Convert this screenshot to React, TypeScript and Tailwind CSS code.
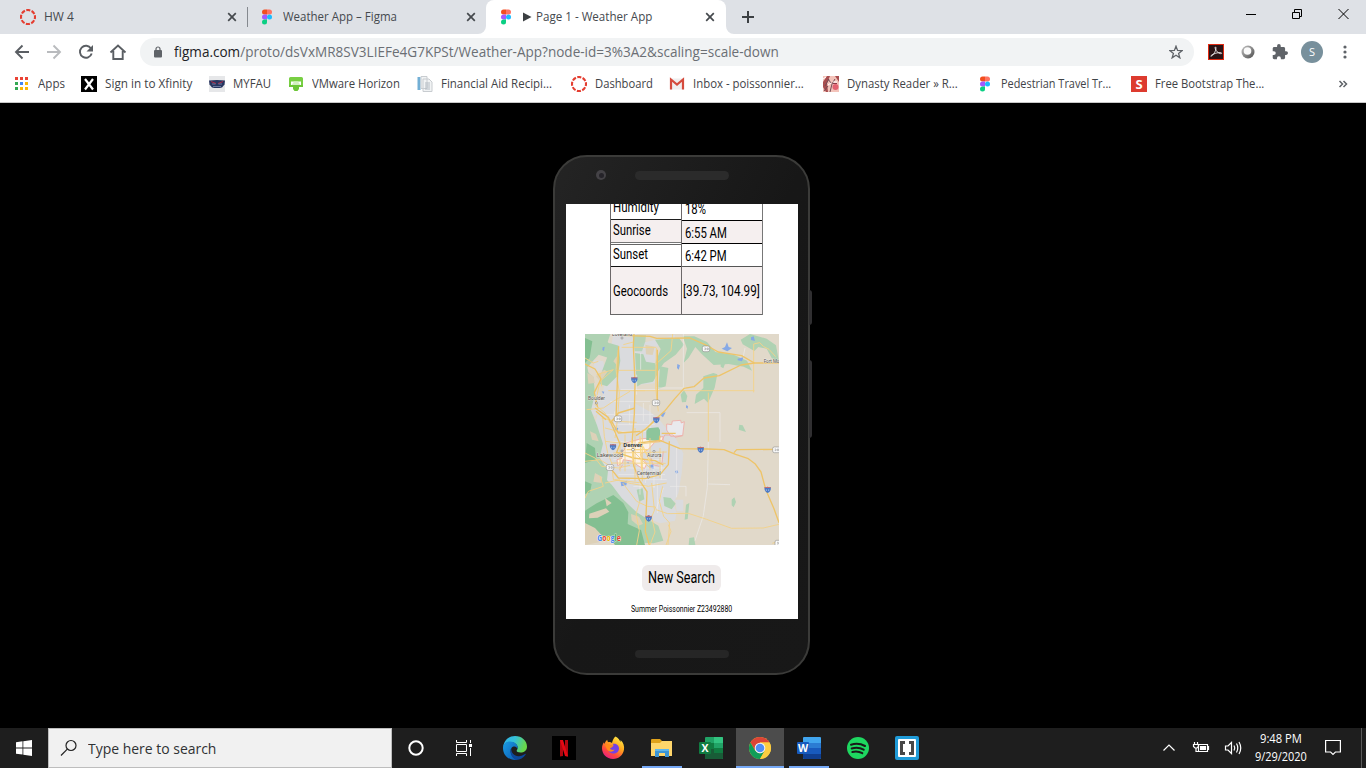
import { useLayoutEffect, useRef, useState } from "react";
import type { ReactNode } from "react";

/* A single line of text squeezed to an exact advance width. */
function Fit({ w, className = "", children }: { w: number; className?: string; children: ReactNode }) {
  const ref = useRef<HTMLSpanElement>(null);
  const [k, setK] = useState(1);
  useLayoutEffect(() => {
    if (ref.current && ref.current.offsetWidth > 0) setK(w / ref.current.offsetWidth);
  }, [w]);
  return (
    <span className="block shrink-0 whitespace-nowrap" style={{ width: w }}>
      <span ref={ref} className={`inline-block origin-left whitespace-nowrap align-top ${className}`} style={{ transform: `scaleX(${k})` }}>
        {children}
      </span>
    </span>
  );
}

const FigmaIcon = () => (
  <svg width="16" height="16" viewBox="0 0 16 16" className="shrink-0">
    <path d="M8 .5H5.5a2.5 2.5 0 0 0 0 5H8z" fill="#f24e1e" />
    <path d="M8 .5h2.5a2.5 2.5 0 0 1 0 5H8z" fill="#ff7262" />
    <path d="M8 5.5H5.5a2.5 2.5 0 0 0 0 5H8z" fill="#a259ff" />
    <circle cx="10.5" cy="8" r="2.5" fill="#1abcfe" />
    <path d="M8 10.5H5.5A2.5 2.5 0 1 0 8 13z" fill="#0acf83" />
  </svg>
);

const CanvasIcon = () => (
  <svg width="16" height="16" viewBox="0 0 16 16" className="shrink-0">
    <circle cx="8" cy="8" r="7" fill="none" stroke="#e43d30" strokeWidth="2.1" strokeDasharray="4.1 1.4" strokeDashoffset="2" />
  </svg>
);

const CloseIcon = () => (
  <svg width="10" height="10" viewBox="0 0 10 10" className="shrink-0">
    <path d="M1.2 1.2l7.6 7.6M8.8 1.2L1.2 8.8" stroke="#45494d" strokeWidth="1.7" />
  </svg>
);

function TabStrip() {
  return (
    <div className="flex h-[34px] bg-[#dee1e6] text-[12px] leading-4 text-[#45494e]">
      <div className="flex w-[248px] items-center pl-5">
        <CanvasIcon />
        <div className="w-2 shrink-0" />
        <Fit w={30}>HW 4</Fit>
        <div className="grow" />
        <CloseIcon />
        <div className="h-5 w-[11px] shrink-0 border-r border-[#85898f]" />
      </div>
      <div className="flex w-[238px] items-center pl-[11px]">
        <FigmaIcon />
        <div className="w-2 shrink-0" />
        <Fit w={114}>Weather App – Figma</Fit>
        <div className="grow" />
        <CloseIcon />
        <div className="w-[10px] shrink-0" />
      </div>
      <div className="relative flex w-[240px] items-center rounded-t-lg bg-white pl-3">
        <svg className="absolute bottom-0 -left-2" width="8" height="8">
          <path d="M8 0v8H0a8 8 0 0 0 8-8z" fill="#fff" />
        </svg>
        <svg className="absolute -right-2 bottom-0" width="8" height="8">
          <path d="M0 0v8h8a8 8 0 0 1-8-8z" fill="#fff" />
        </svg>
        <FigmaIcon />
        <div className="w-[9px] shrink-0" />
        <svg width="9" height="10" viewBox="0 0 9 10" className="shrink-0">
          <path d="M0 .5l8.5 4.5L0 9.500z" fill="#3c4043" />
        </svg>
        <div className="w-1 shrink-0" />
        <Fit w={116}>Page 1 - Weather App</Fit>
        <div className="grow" />
        <CloseIcon />
        <div className="w-[11px] shrink-0" />
      </div>
      <svg className="mt-[11px] ml-4" width="12" height="12" viewBox="0 0 12 12">
        <path d="M6 0v12M0 6h12" stroke="#3c4043" strokeWidth="2" />
      </svg>
      <div className="grow" />
      <svg className="mt-2" width="120" height="14" viewBox="0 0 120 14" fill="none" stroke="#000">
        <path d="M0 6.500h10M46.500 4.500h7v6h-7zM48.500 4.500v-3h7v7h-2M92.500 1l10 10M102.500 1l-10 10" />
      </svg>
    </div>
  );
}

function Toolbar() {
  return (
    <div className="flex h-9 items-center bg-white">
      <svg width="140" height="36" viewBox="0 34 140 36" fill="none" stroke="#5a5e63" strokeWidth="1.900" className="shrink-0">
        <path d="M29 52H17M22.500 45.500L16 52l6.500 6.500" />
        <path d="M47 52h12M53.500 45.500L60 52l-6.500 6.500" stroke="#b9bbbe" />
        <path d="M91 48.500a6 6 0 1 0 .7 5" />
        <path d="M93 45v6.500h-6.500z" fill="#5a5e63" stroke="none" />
        <path d="M110.500 52.500l7.500-7 7.500 7M113.300 51v8h9.400v-8" />
      </svg>
      <div className="flex h-7 w-[1054px] shrink-0 items-center rounded-full bg-[#f1f3f4] pl-[14px] text-[14px] leading-5 text-[#6b6f74]">
        <svg width="8" height="12" viewBox="0 0 8 12">
          <path d="M2 5V3a2 2 0 0 1 4 0v2" fill="none" stroke="#5f6368" strokeWidth="1.200" />
          <rect y="4" width="8" height="7.500" rx="1" fill="#5f6368" />
        </svg>
        <div className="w-3 shrink-0" />
        <Fit w={605}>
          <span className="text-[#202124]">figma.com</span>/proto/dsVxMR8SV3LIEFe4G7KPSt/Weather-App?node-id=3%3A2&amp;scaling=scale-down
        </Fit>
        <div className="grow" />
        <svg width="14" height="14" viewBox="0 0 24 24" fill="none" stroke="#5f6368" strokeWidth="2.200" className="mr-[11px]">
          <path d="M12 2l2.700 7.200 8 .3-6.300 4.900 2.200 7.600L12 17.600 5.400 22l2.200-7.600L1.300 9.500l8-.3z" />
        </svg>
      </div>
      <svg width="16" height="16" viewBox="0 0 16 16" className="ml-[14px] shrink-0">
        <rect x=".5" y=".5" width="15" height="15" fill="#2b1416" stroke="#e22a12" />
        <path d="M3 12.300c2.500-1 5.200-5.500 5-8.500-.1-1.300-1.200-1-.8.500.7 2.700 3 5 5.500 5.400 1.300.1 1.200-1 0-1.100-3.200-.2-6.600.9-9 2.500-.8.600-1.200 1.200-.7 1.200z" fill="none" stroke="#fff" strokeWidth=".8" />
      </svg>
      <svg width="16" height="16" viewBox="0 0 16 16" className="ml-4 shrink-0">
        <defs>
          <linearGradient id="ring" x1="0" y1="0" x2="1" y2="1">
            <stop offset="0" stopColor="#c4c4c4" />
            <stop offset="1" stopColor="#4d4d4d" />
          </linearGradient>
        </defs>
        <circle cx="8" cy="8" r="6.500" fill="url(#ring)" />
        <circle cx="7.500" cy="7" r="3.800" fill="#fafafa" />
      </svg>
      <svg width="16" height="16" viewBox="1 1 22 22" className="ml-4 shrink-0">
        <path fill="#5f6368" d="M20.500 11H19V7c0-1.100-.9-2-2-2h-4V3.500a2.500 2.500 0 0 0-5 0V5H4c-1.100 0-2 .9-2 2v3.800h1.500a2.700 2.700 0 0 1 0 5.400H2V20c0 1.100.9 2 2 2h3.800v-1.500a2.700 2.700 0 0 1 5.400 0V22H17c1.100 0 2-.9 2-2v-4h1.500a2.500 2.500 0 0 0 0-5z" />
      </svg>
      <div className="ml-[13px] flex size-[22px] shrink-0 items-center justify-center rounded-full bg-[#78909c] text-[11px] text-white">S</div>
      <svg width="4" height="14" viewBox="0 0 4 14" fill="#5f6368" className="ml-5 shrink-0">
        <circle cx="2" cy="2" r="1.600" />
        <circle cx="2" cy="7" r="1.600" />
        <circle cx="2" cy="12" r="1.600" />
      </svg>
    </div>
  );
}

const AppsIcon = () => (
  <svg width="16" height="16" viewBox="0 0 16 16" className="shrink-0">
    <path d="M1 1h3v3H1zM6 1h3v3H6zM11 1h3v3h-3z" fill="#ea4335" />
    <path d="M1 6h3v3H1zM1 11h3v3H1z" fill="#34a853" />
    <path d="M6 6h3v3H6z" fill="#4285f4" />
    <path d="M11 6h3v3h-3zM6 11h3v3H6zM11 11h3v3h-3z" fill="#fbb605" />
  </svg>
);
const XfinityIcon = () => (
  <svg width="16" height="16" viewBox="0 0 16 16" className="shrink-0">
    <rect width="16" height="16" />
    <path d="M4 3l8 10.500M12 3L4 13.500" stroke="#fff" strokeWidth="2.200" />
  </svg>
);
const OwlIcon = () => (
  <svg width="16" height="16" viewBox="0 0 16 16" className="shrink-0">
    <rect width="16" height="16" fill="#e6e7e9" />
    <path d="M0 4.500c5-.8 11-.8 16 0l-.5 4-2.500 3c-3 .8-7 .8-10 0l-2.500-3z" fill="#27355f" />
    <path d="M2 5.500l5 2M14 5.500L9 7.500" stroke="#b02a46" />
    <path d="M3 8h3.500M9.500 8H13M4 10.500h8" stroke="#7d8bb0" strokeWidth=".8" />
  </svg>
);
const VMIcon = () => (
  <svg width="16" height="16" viewBox="0 0 16 16" className="shrink-0">
    <path d="M2.500 1h11A1.500 1.500 0 0 1 15 2.500V10h-2V5.500H3V10H1V2.500A1.500 1.500 0 0 1 2.500 1z" fill="#78cf43" />
    <path d="M6 5.500h4l3 4.500H3z" fill="#d3efc2" />
    <path d="M1 9h14v2H1zM5 11h6v2L9.500 15h-3L5 13z" fill="#6cc638" />
  </svg>
);
const DocIcon = () => (
  <svg width="16" height="16" viewBox="0 0 16 16" className="shrink-0">
    <path d="M.5 1h3v13h-3z" fill="#72afd5" />
    <path d="M4 .5h6v12H4zM6 3h6l3 3v9.500H6z" fill="#f1f3f4" stroke="#c8ccd0" />
    <path d="M8 7h5M8 9h5M8 11h5M8 13h5" stroke="#b2bac2" />
  </svg>
);
const GmailIcon = () => (
  <svg width="16" height="16" viewBox="0 0 16 16" className="shrink-0">
    <rect x="1" y="2.500" width="14" height="11" fill="#f0eeee" />
    <path d="M2 13.500v-10l6 5 6-5v10" fill="none" stroke="#d54b3d" strokeWidth="2.200" />
  </svg>
);
const DynastyIcon = () => (
  <svg width="16" height="16" viewBox="0 0 16 16" className="shrink-0">
    <rect width="16" height="16" fill="#f3c3ba" />
    <path d="M0 6l4-6h3L4 7l1 9H3L0 11zM12 0h4v6z" fill="#a84e50" />
    <path d="M2 10l4-7M7 16l2-8 3-5M1 15l4-5M5 3l3 4" stroke="#724b55" fill="none" />
    <circle cx="12.500" cy="11" r="3" fill="#e26170" />
    <path d="M5 9l3-2M10 6h4M0 3l3-2" stroke="#fff" />
    <path d="M10 7.500h4" stroke="#8e3a48" />
  </svg>
);
const SIcon = () => (
  <div className="flex size-4 shrink-0 items-center justify-center bg-[#dd3b2f] text-[13px] leading-none font-bold text-white">S</div>
);

function Bookmark({ cell, icon, w, label }: { cell: string; icon: ReactNode; w: number; label: string }) {
  return (
    <div className={`flex shrink-0 items-center gap-2 ${cell}`}>
      {icon}
      <Fit w={w}>{label}</Fit>
    </div>
  );
}

function Bookmarks() {
  return (
    <div className="flex h-[33px] items-center border-b border-[#c8c8c8] bg-white pb-[4px] pl-[14px] text-[12px] leading-4 text-[#3f4347]">
      <Bookmark cell="w-[67px]" icon={<AppsIcon />} w={27} label="Apps" />
      <Bookmark cell="w-[128px]" icon={<XfinityIcon />} w={87} label="Sign in to Xfinity" />
      <Bookmark cell="w-[79px]" icon={<OwlIcon />} w={38} label="MYFAU" />
      <Bookmark cell="w-[129px]" icon={<VMIcon />} w={88} label="VMware Horizon" />
      <Bookmark cell="w-[154px]" icon={<DocIcon />} w={111} label="Financial Aid Recipi..." />
      <Bookmark cell="w-[98px]" icon={<CanvasIcon />} w={58} label="Dashboard" />
      <Bookmark cell="w-[154px]" icon={<GmailIcon />} w={111} label="Inbox - poissonnier..." />
      <Bookmark cell="w-[154px]" icon={<DynastyIcon />} w={111} label="Dynasty Reader » R..." />
      <Bookmark cell="w-[154px]" icon={<FigmaIcon />} w={110} label="Pedestrian Travel Tr..." />
      <Bookmark cell="w-[207px]" icon={<SIcon />} w={109} label="Free Bootstrap The..." />
      <svg width="10" height="8" viewBox="0 0 10 8" fill="none" stroke="#5f6368" strokeWidth="1.500">
        <path d="M1.500 1l3 3-3 3M5.500 1l3 3-3 3" />
      </svg>
    </div>
  );
}

const Interstate = ({ x, y }: { x: number; y: number }) => (
  <g transform={`translate(${x} ${y})`}>
    <path d="M-9-8q4 2 9-1 5 3 9 1 3 12-9 18-12-6-9-18z" fill="#4a79c5" />
    <path d="M-9-8q4 2 9-1 5 3 9 1v3H-9z" fill="#d06b67" />
    <path d="M-4 4v-5M3-1v5" stroke="#c5d4f0" strokeWidth="2" />
  </g>
);
const Route = ({ x, y }: { x: number; y: number }) => (
  <g transform={`translate(${x} ${y})`}>
    <rect x="-11" y="-8" width="22" height="17" rx="5" fill="#fafafa" stroke="#808080" strokeWidth="1.600" />
    <path d="M-5-2h4v5h-4M3-2h4v5H3z" fill="none" stroke="#858585" strokeWidth="1.500" />
  </g>
);

function MapView() {
  return (
    <svg className="block h-[211px] w-[194px]" viewBox="15 18 582 633" preserveAspectRatio="none">
      <rect x="15" y="18" width="582" height="633" fill="#e1d9ca" />
      {/* urban */}
      <g fill="#dadbde">
        <path d="M100 18h70l5 30 110-28v14l-55 22-5 110-60 5 0 55 45 25 25 20 20 25 30 30 25 50-5 60-10 60-15 30 10 30-5 22-45 8-40-15-70-35-50-65-15-60-10-70-8-60 20-80z" />
        <path d="M20 190l40 5 10 45-25 25-22-20zM40 95l30 5 5 25-30 5z" />
        <path d="M225 505l40 5 15 15v22l-35 10-20-25zM285 515h25v35h-20z" />
      </g>
      {/* parks and valleys */}
      <g fill="#afd2b3">
        <path d="M15 18h76l-8 24 18 18-15 30-30-10-18 20-16 18 8 40-15 8z" />
        <path d="M88 45l28 8 5 45-8 45-32 32-24-8 10-40 15-40z" />
        <path d="M165 75l25 4 8 22 28 5 8 30-15 25-35 7-14 8z" />
        <path d="M158 22l40 0-2 18-10 30-22 0z" opacity=".8" />
        <path d="M225 35l72-5 15 20-25 30-35 25-20 28-5-30 15-40z" />
        <path d="M240 115l25 5-8 55-22 8z" />
        <path d="M308 25h35l38 17 25 30 55 8 40 18 15 30-25-12-45-8-45 3-35-32-20-22-20 32-15 15 10-42z" />
        <path d="M482 35l28-17 50 14 28 20 9 50-22-12-15-28-25-5-12 12-35-20z" />
        <path d="M370 145l30-10 12 4-8 40-20 45-12-12-28 16 4-28 22-20z" />
        <path d="M302 200l10-14 10 18-4 18-12 1z" />
        <path d="M422 100l8-5 5 12-5 14-8-5zM478 290l10 2 10 20-22-7zM455 515l8-7 5 14-7 16-6-6z" />
        <path d="M15 125l25 22 5 50-12 50 18 45 18 55-10 42 25 40-5 45-15 35-49 10z" />
        <path d="M15 440l45-5 35 35 30 40 45 43 65 40 15 45-30 8-205-10z" />
        <path d="M170 485l18-4 5 33-15 7zM250 507l22 3 15 17-12 17-22-10zM318 530l10-5-5 48-9 2zM328 630l14-2 4 23h-20z" />
      </g>
      <g fill="#83bf91">
        <path d="M15 30l22 10-8 50-14 15zM20 345l25 15 3 35-33 10zM15 460l20 8-5 25-15 5z" />
        <path d="M15 548l35-22 50-25 30 24 15 28-2 35 40 18 12 45H105l-20-26-70-10z" />
      </g>
      <g fill="#ddd1b8">
        <path d="M28 557l50-16 10 10-35 18-26 2zM15 585l30 15 35 38-65 13zM153 558l24 8 12 22-14 5-20-16z" />
        <path d="M22 135l18 10 5 20-20 2zM100 100l10-15 2 28zM30 310l18 8 8 22-20-5z" />
        <path d="M75 510l20 15-15 10zM45 435l22 12-3 18-24-4zM196 50l28 6-6 25-20-2zM48 145l25-20 10 6-22 30z" />
      </g>
      {/* reservoirs */}
      <g fill="#86a9e6">
        <path d="M425 62l10-5 6-14 5 14 10 3-14 10zM513 28l8-3 4 14-12-3zM473 92l17-4-4 12-13-3zM292 108l8 4-4 13-5-5zM68 58l6-2-2 13-5-3zM245 255l12-2-8 15-6-5zM318 232l6 2-1 8-5-3zM208 412l12-3 3 15-14-5zM122 462l20-4-3 14-15 3zM100 298l15 2-3 8-12-2zM65 190l8 1-3 7zM285 430l6-4 4 7-6 5zM140 405l5-4 3 6z" />
      </g>
      {/* minor roads */}
      <g fill="none" stroke="#edeceb" strokeWidth="2">
        <path d="M310 18v160M228 180h90M420 254v88M320 254h100M385 341l-3 137-12 85-25 75M290 356v152M270 475h48v30M495 60l-5 25M122 185h115M90 220h120M75 260h145M95 290h130M110 310h110M100 395h150M105 420h150M115 440h140M90 340h75M170 140v60M182 75v50M190 225v55M148 230v60M104 250v70M210 230v80M196 400v65M222 410v70M245 370v85M150 455h110M160 475h65M180 435v65M232 465v90" />
        <path d="M385 468l65 2M250 480l-20 60" />
      </g>
      {/* Denver core */}
      <path d="M138 345l22-6 20-6 20-2 12-8 15 6 22-3 0 14-24 2-20 22-24 15 5 10 14 18-6 14-14-4-25-18-25-4-3 10-14 8-2-18 15-4-5-15 12-10z" fill="#fbf2ea" stroke="#efa8a0" strokeWidth="2.500" />
      <path d="M260 288l15 2 2-11 25-2 2 8 9-4-5 42-36 2-12-19z" fill="#e9e9ed" stroke="#eeaaa5" strokeWidth="2.500" />
      <path d="M198 333l10-2 3 12 35-6 8-16h25l6 7 22-5M118 425l10-15M213 390l5 20 20 5M250 370l-4 35-16 3" fill="none" stroke="#efaaa3" strokeWidth="2.500" />
      <path d="M199 309l6-8 30-3 5 8v22l-4 12-37-4z" fill="#8dc59b" />
      {/* secondary roads */}
      <g fill="none" stroke="#f2d28a" strokeWidth="2.800" strokeLinejoin="round">
        <path d="M125 58h104M110 127h117M85 188h110M160 188h363M385 194v147M521 193V48l18-4 12 12 16 8 20 22M15 90l25 15 15-5M115 65l-7 60 10 70-5 75-8 60M229 60l-2 120 8 70M100 125l-40 35-15 70 30 25 15 30M130 50l30-8M50 140l50-15M65 175l-5-40M278 18l-5 50-45 40" />
        <path d="M20 245l50-5 30-20 50-30M65 270l45 10 60 3M75 300l60 15 50-5 40-30M68 265l5 60 10 50 12 30 5 50 85 10M15 375l30 15 20 25 50 5 35-8M15 400l45-5 40 25M75 340l90 10 85-10M100 375l160-3M95 405l162 1M165 300v160M187 305v155M135 320v110M210 330v95M240 360v90M120 340v90M60 445l10 30-45 15-10 20M75 465l45-10M105 455l50 12 50 8 55-10M160 370l50 50" />
        <path d="M128 465l42 55 32 15 25 2-12 30 10 45-15 39M180 518l-12 40 10 50-8 43M215 465l8 80M248 475l-10 45 13 45 18 20-5 66M228 545l35 12M263 557l62-1 55 18 75 27 95-1 47-11M265 590l8 20-15 41M597 640l-20 6" />
      </g>
      {/* highways */}
      <g fill="none" stroke="#eec468" strokeWidth="4" strokeLinejoin="round">
        <path d="M125 22l85 3 20 6 100-1 45 20 40 22 70 11 38 22h74" />
        <path d="M162 18l-2 35 5 110-2 95-6 75 4 80 18 45 22 33-5 120 12 40" />
        <path d="M523 105l-40 6-65 32-46 7-30 26-30 5-27 30-30 37-22 20-35 35-30 20" />
        <path d="M175 345l65-8 60 25 82 1 50 2 35 14 38 13 20 15 18 25 15 55 24 55 15 42M462 374l8-9 127-1" />
        <path d="M45 240l40 28 20 45 15 35-10 25 50 17 65 8 25 13M116 55l-8 215M232 65v165M165 240l-50 15-20 25 20 35 65-5M268 340l-3 70-25 30-45 12-80-2-20-25" />
        <path d="M15 108l30 15 18 30-20 40 10 45M48 250l30 25M240 323l-2 18M245 316h42" />
      </g>
      <path d="M165 352l25 5 22 50M140 365h65M155 337l5 70M180 325l5 100" fill="none" stroke="#fad887" strokeWidth="4" />
      <Interstate x={163} y={156} />
      <Interstate x={229} y={276} />
      <Interstate x={99} y={357} />
      <Interstate x={362} y={365} />
      <Interstate x={563} y={485} />
      <Interstate x={206} y={571} />
      <Route x={378} y={62} />
      <Route x={228} y={224} />
      <Route x={114} y={272} />
      <Route x={90} y={418} />
      <Route x={589} y={365} />
      <Route x={596} y={645} />
      <g fill="#4c4c4c" stroke="#f3efe7" strokeWidth="2" paintOrder="stroke" fontFamily="Roboto, sans-serif" fontSize="16">
        <text x="96" y="24" textLength="60" lengthAdjust="spacingAndGlyphs">Loveland</text>
        <text x="24" y="217" textLength="51" lengthAdjust="spacingAndGlyphs">Boulder</text>
        <text x="551" y="105" textLength="74" lengthAdjust="spacingAndGlyphs">Fort Morgan</text>
        <text x="130" y="357" fontWeight="700" fontSize="17" textLength="57" lengthAdjust="spacingAndGlyphs" fill="#333">Denver</text>
        <text x="50" y="388" textLength="79" lengthAdjust="spacingAndGlyphs">Lakewood</text>
        <text x="201" y="388" textLength="43" lengthAdjust="spacingAndGlyphs">Aurora</text>
        <text x="170" y="441" textLength="72" lengthAdjust="spacingAndGlyphs">Centennial</text>
      </g>
      <g fill="#fff" stroke="#555" strokeWidth="1.500">
        <circle cx="159" cy="365" r="4" />
        <circle cx="222" cy="370" r="3" />
        <circle cx="49" cy="225" r="3" />
        <circle cx="205" cy="447" r="3" />
        <circle cx="126" cy="369" r="3" />
        <circle cx="126" cy="30" r="3" />
      </g>
      <text x="52" y="640" fontFamily="Open Sans, sans-serif" fontSize="24" fontWeight="700" textLength="70" lengthAdjust="spacingAndGlyphs" stroke="#fff" strokeWidth="2" paintOrder="stroke">
        <tspan fill="#4285f4">G</tspan><tspan fill="#ea4335">o</tspan><tspan fill="#f5b400">o</tspan><tspan fill="#4285f4">g</tspan><tspan fill="#34a853">l</tspan><tspan fill="#ea4335">e</tspan>
      </text>
    </svg>
  );
}

function Phone() {
  return (
    <div className="relative h-[520px] w-[257px] rounded-[34px] border-2 border-[#3b3b39] bg-gradient-to-br from-[#242424] via-[#171717] to-[#181818] font-[Roboto,sans-serif] text-black">
      <div className="absolute top-[133px] -right-[4px] h-[35px] w-[3px] rounded-r-sm bg-[#302f31]" />
      <div className="absolute top-[203px] -right-[4px] h-[78px] w-[3px] rounded-r-sm bg-[#302f31]" />
      <div className="flex h-[47px] pt-[13px] pl-[41px]">
        <div className="flex size-[10px] items-center justify-center rounded-full bg-[#444246]">
          <div className="size-[5px] rounded-full bg-[#252329]" />
        </div>
        <div className="mt-[1px] ml-[29px] h-[9px] w-[94px] rounded-full bg-[#2b2b2b]" />
      </div>
      <div className="ml-[11px] h-[415px] w-[232px] overflow-hidden bg-white">
        <div className="ml-[44px] flex text-[14px] leading-4">
          <div className="w-[72px] border-x border-[#6c6869]">
            <div className="flex h-[16px] items-end border-b border-[#1e1e1e] pb-[4px] pl-[2px]">
              <Fit w={46}>Humidity</Fit>
            </div>
            <div className="flex h-[23px] items-center border-b border-[#777] bg-[#f5efef] pb-[2px] pl-[2px]">
              <Fit w={38}>Sunrise</Fit>
            </div>
            <div className="mt-px flex h-[23px] items-center border-t border-b border-t-[#666] border-b-[#111] pb-[3px] pl-[2px]">
              <Fit w={35}>Sunset</Fit>
            </div>
            <div className="flex h-[48px] items-center border-b border-[#666] bg-[#f5efef] pl-[2px]">
              <Fit w={55}>Geocoords</Fit>
            </div>
          </div>
          <div className="w-[81px] border-r border-[#777]">
            <div className="flex h-[17px] items-end border-b border-black pb-[3px] pl-[3px]">
              <Fit w={21}>18%</Fit>
            </div>
            <div className="flex h-[23px] items-center border-b border-black bg-[#f5efef] pt-px pl-[3px]">
              <Fit w={42}>6:55 AM</Fit>
            </div>
            <div className="flex h-[23px] items-center border-b border-[#555] pt-[2px] pl-[3px]">
              <Fit w={42}>6:42 PM</Fit>
            </div>
            <div className="flex h-[48px] items-center border-b border-[#666] bg-[#f5efef] pl-px">
              <Fit w={77}>[39.73, 104.99]</Fit>
            </div>
          </div>
        </div>
        <div className="mt-[19px] ml-[19px]">
          <MapView />
        </div>
        <div className="mt-5 ml-[76px] flex h-[26px] w-[79px] items-center justify-center rounded-[6px] bg-[#efebeb] text-[16px]">
          <Fit w={67}>New Search</Fit>
        </div>
        <div className="mt-[13px] ml-[65px] text-[8.5px] leading-[11px]">
          <Fit w={101}>Summer Poissonnier Z23492880</Fit>
        </div>
      </div>
      <div className="mt-[31px] ml-[80px] h-[8px] w-[94px] rounded-full bg-[#262626]" />
    </div>
  );
}

const EdgeIcon = () => (
  <svg width="24" height="24" viewBox="0 0 24 24">
    <defs>
      <linearGradient id="e1" x1="0" y1="0" x2="1" y2=".3">
        <stop offset="0" stopColor="#2fb1ea" />
        <stop offset=".5" stopColor="#35c1d8" />
        <stop offset="1" stopColor="#68d84b" />
      </linearGradient>
      <linearGradient id="e2" x1="0" y1="0" x2="1" y2="1">
        <stop offset="0" stopColor="#1b9de2" />
        <stop offset="1" stopColor="#0a5ab5" />
      </linearGradient>
    </defs>
    <path d="M.3 10.500C1 4.500 6 0 12 0c7 0 12 5 12 10.500 0 4-3 6-6.500 6-2.700 0-4.200-1-3.800-2 .5-1 1-1.500 1-2.800C14.700 8 10.500 6 7 6 3.500 6 1.300 8 .3 10.500z" fill="url(#e1)" />
    <path d="M0 12c0-4 3-6.500 7-6.500 4.500 0 7.700 3 7.700 6 0 .6-.1 1.100-.4 1.600-.2-2-1.800-3.100-3.800-2.600-2 .6-3.500 3-2.600 6.500 1 4 4.500 6.500 6.500 6.700C6 25 0 19.500 0 12z" fill="url(#e2)" />
    <path d="M8.500 11.500c-1.200 6 4 9.500 8.500 8.500 2-.4 3.600-1.300 5.200-2.100.5-.2.800.1.500.6C20.500 22 17 23.900 13.500 23.900 8.500 22.500 6 16 8.500 11.500z" fill="#0d489b" />
  </svg>
);

const FirefoxIcon = () => (
  <svg width="24" height="24" viewBox="0 0 24 24">
    <defs>
      <linearGradient id="ff" x1=".8" y1="0" x2=".2" y2="1">
        <stop offset="0" stopColor="#fff04a" />
        <stop offset=".4" stopColor="#ffa51d" />
        <stop offset=".7" stopColor="#ff4a3c" />
        <stop offset="1" stopColor="#e3178d" />
      </linearGradient>
    </defs>
    <path d="M14.500.5c3 1.500 4.500 4 4.800 5.500.4-.6.400-1.400.2-2 3 2.500 4 6 3.500 9.500C22.200 19 17.800 23 12 23 5.500 23 1 18 1 12.300c0-2.500.8-4.500 2-6L3.300 8c.7-1.500 1.500-3 2.800-4.300L7 6.300c1.800-.5 3 0 4 .8C11.500 4.500 12.500 2 14.500.5z" fill="url(#ff)" />
    <path d="M7 9.500c1.500-1 3-.5 4 .5 2 0 2-1 .5-2 3-1 6.500 1 6.500 4.500 0 3-2.500 5-5.500 5C9 17.500 6.500 15 7 12z" fill="#7542e5" />
    <path d="M4 9c2-1.500 4-1 5.500 0l2.500 1.200c-.5 1.300-2.600 1.500-3 2.300 1 1.500 3 1.800 4.500 1-1 2.500-5 3-7 .5C5.300 12.500 5 10.500 4 9z" fill="#ff8a19" />
  </svg>
);

const FolderIcon = () => (
  <svg width="24" height="24" viewBox="0 0 24 24">
    <path d="M1 4a1 1 0 0 1 1-1h8l2 2h9a1 1 0 0 1 1 1v14H1z" fill="#e0a21b" />
    <path d="M1 7h9l2-2h10v15H1z" fill="#ffd66b" />
    <path d="M5 21v-8h14v8h-4v-4H9v4z" fill="#3d96d5" />
    <path d="M5 13h14v2H5z" fill="#60b7ec" />
  </svg>
);

const OfficeIcon = ({ kind }: { kind: "excel" | "word" }) => {
  const c = kind === "excel" ? ["#21a366", "#33c481", "#107c41", "#185c37"] : ["#41a5ee", "#2b7cd3", "#185abd", "#103f91"];
  return (
    <svg width="24" height="24" viewBox="0 0 24 24">
      <rect x="6" y="1" width="18" height="22" rx="1" fill={c[0]} />
      {kind === "excel" ? (
        <>
          <path d="M15 1h8a1 1 0 0 1 1 1v5h-9z" fill={c[1]} />
          <path d="M6 7h9v6H6zM15 12h9v5h-9z" fill={c[2]} />
          <path d="M6 13h9v4h9v5a1 1 0 0 1-1 1H6z" fill={c[3]} />
        </>
      ) : (
        <>
          <path d="M6 7h18v5H6z" fill={c[1]} />
          <path d="M6 12h18v6H6z" fill={c[2]} />
          <path d="M6 18h18v4a1 1 0 0 1-1 1H7a1 1 0 0 1-1-1z" fill={c[3]} />
        </>
      )}
      <rect x="0" y="6" width="12" height="12" rx="1" fill={c[2]} />
      <text x="6" y="16" textAnchor="middle" fontFamily="Open Sans, sans-serif" fontSize="10.500" fontWeight="700" fill="#fff">
        {kind === "excel" ? "X" : "W"}
      </text>
    </svg>
  );
};

const ChromeIcon = () => (
  <svg width="24" height="24" viewBox="0 0 24 24">
    <circle cx="12" cy="12" r="11" fill="#fcc934" />
    <path d="M2.470 6.500A11 11 0 0 1 21.530 6.500H12L7.240 14.750z" fill="#db4437" />
    <path d="M2.470 6.500A11 11 0 0 0 12 23l4.760-8.250L12 17.500 7.240 14.750z" fill="#109d58" />
    <path d="M21.530 6.500H12l4.760 8.250L12 23A11 11 0 0 0 21.530 6.500z" fill="#fdcd41" />
    <circle cx="12" cy="12" r="5.300" fill="#f4f4f4" />
    <circle cx="12" cy="12" r="4.300" fill="#4f8df5" />
  </svg>
);

function Task({ children, line = "", cell = "" }: { children: ReactNode; line?: string; cell?: string }) {
  return (
    <div className={`flex h-10 w-12 shrink-0 flex-col items-center ${cell}`}>
      <div className="flex h-[38px] items-center justify-center pt-[2px]">{children}</div>
      <div className={`h-[2px] ${line}`} />
    </div>
  );
}

function Taskbar() {
  return (
    <div className="flex h-10 bg-[#1e1e1e]">
      <div className="flex w-12 items-center justify-center">
        <svg width="16" height="16" viewBox="0 0 16 16" fill="#fff">
          <path d="M0 2.200l6.500-.9v6.200H0zM7.300 1.200L16 0v7.500H7.300zM0 8.400h6.500v6.200L0 13.700zM7.300 8.400H16V16l-8.700-1.200z" />
        </svg>
      </div>
      <div className="flex w-[344px] items-center border border-[#bdbdbd] bg-[#f1f1f1] pl-[11px] text-[14.5px] leading-5 text-[#303234]">
        <svg width="18" height="18" viewBox="0 0 18 18" fill="none" stroke="#222" strokeWidth="1.200">
          <circle cx="11" cy="6.500" r="5" />
          <path d="M7.300 10.200L1 16.500" />
        </svg>
        <div className="w-[10px]" />
        <div className="pt-px">
          <Fit w={128}>Type here to search</Fit>
        </div>
      </div>
      <Task>
        <svg width="18" height="18" viewBox="0 0 18 18">
          <circle cx="9" cy="9" r="6.700" fill="none" stroke="#fff" strokeWidth="2" />
        </svg>
      </Task>
      <Task>
        <svg width="18" height="16" viewBox="0 0 18 16" fill="none" stroke="#fff">
          <path d="M1.500 4.500h10v7h-10zM1.500 0v2.500h10V0M1.500 16v-2.500h10V16M15.500 0v3M15.500 8v8" />
          <path d="M14 4h3v3h-3z" fill="#fff" stroke="none" />
        </svg>
      </Task>
      <div className="ml-[3px] flex gap-px">
        <Task><EdgeIcon /></Task>
        <Task>
          <svg width="24" height="24" viewBox="0 0 24 24">
            <rect width="24" height="24" />
            <path d="M8 4h3v16l-3 .4zM13 4h3v16.400L13 20z" fill="#b20710" />
            <path d="M8 4h3l5 16.400-3-.4z" fill="#e50914" />
          </svg>
        </Task>
        <Task><FirefoxIcon /></Task>
        <Task line="w-10 bg-[#76a9f6]"><FolderIcon /></Task>
        <Task><OfficeIcon kind="excel" /></Task>
        <Task cell="bg-[#4c4c4c]" line="w-12 bg-[#76a9f6]"><ChromeIcon /></Task>
        <Task line="w-10 bg-[#76a9f6]"><OfficeIcon kind="word" /></Task>
        <Task>
          <svg width="24" height="24" viewBox="0 0 24 24">
            <circle cx="12" cy="12" r="11" fill="#1ed760" />
            <path d="M5 8.700q7.500-2.200 14 1.300M5.700 12.500q6.500-1.800 12 1.200M6.300 16q5.500-1.300 10 1.200" fill="none" stroke="#191919" strokeWidth="2" strokeLinecap="round" />
          </svg>
        </Task>
        <Task>
          <svg width="24" height="24" viewBox="0 0 24 24">
            <rect width="24" height="24" rx="2" fill="#1f9bd8" />
            <rect x="3" y="3" width="18" height="18" rx="1" fill="#fff" />
            <path d="M5 5h5v3H8v8h2v3H5zM19 5h-5v3h2v8h-2v3h5z" fill="#474747" />
          </svg>
        </Task>
      </div>
      <div className="grow" />
      <svg width="84" height="40" viewBox="1160 728 84 40" fill="none" stroke="#fff" strokeWidth="1.200" className="shrink-0">
        <path d="M1163.500 750.500l5.500-5.500 5.500 5.500" />
        <path d="M1198.500 744.500h9v7h-9zM1208.500 746v4" />
        <path d="M1200 746h6v4h-6z" fill="#fff" stroke="none" />
        <path d="M1194.500 742v2M1197.500 742v2M1193.500 744.500h5v2l-1.500 1.500h-2l-1.500-1.500zM1196 748v3.500h3" />
        <path d="M1225.500 746h2.500l3.500-3.500v11L1228 750h-2.500zM1234 745.500q1.500 2.500 0 5M1236.500 743.500q2.500 4.500 0 9M1239 742q3.500 6 0 12" />
      </svg>
      <div className="ml-[11px] flex w-[52px] shrink-0 flex-col items-center pt-[2px] text-[12px] leading-[18px] text-white">
        <Fit w={42}>9:48 PM</Fit>
        <Fit w={52}>9/29/2020</Fit>
      </div>
      <svg className="mt-[11px] ml-[18px] shrink-0" width="16" height="18" viewBox="0 0 16 18" fill="none" stroke="#fff" strokeWidth="1.200">
        <path d="M.6 1.500h14.800v11.500h-5L8 15.500 5.600 13h-5z" />
      </svg>
      <div className="mr-1 ml-5 w-px shrink-0 bg-[#5a5a5a]" />
    </div>
  );
}

export default function App() {
  return (
    <div className="flex h-[768px] w-[1366px] flex-col overflow-hidden bg-black font-['Open_Sans','Noto_Sans',sans-serif]">
      <TabStrip />
      <Toolbar />
      <Bookmarks />
      <main className="flex grow pt-[52px] pl-[553px]">
        <Phone />
      </main>
      <Taskbar />
    </div>
  );
}
